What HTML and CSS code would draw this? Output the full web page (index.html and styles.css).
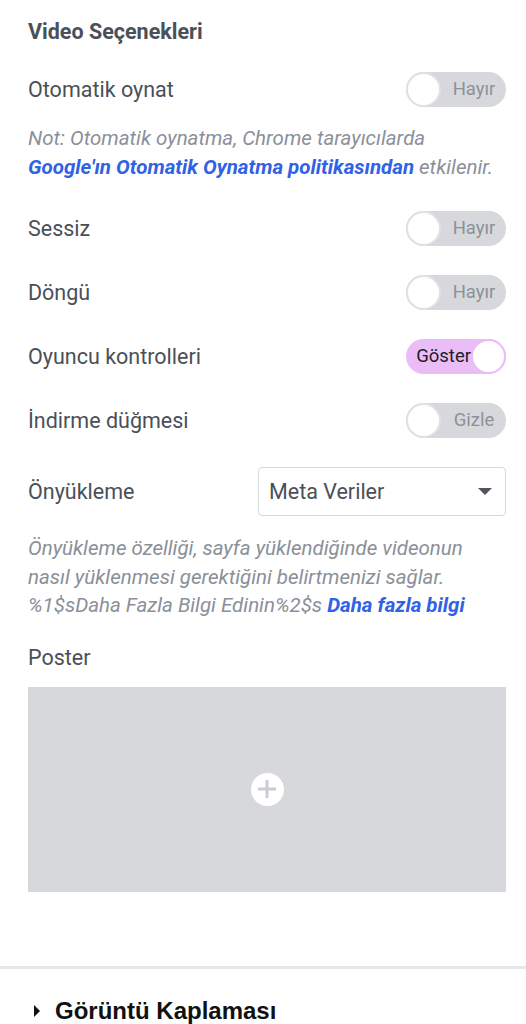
FILE: index.html
```html
<!DOCTYPE html>
<html lang="tr">
<head>
  <meta charset="UTF-8">
  <meta name="viewport" content="width=device-width, initial-scale=1.0">
  <title>Video Seçenekleri</title>
  <link rel="stylesheet" href="styles.css">
</head>
<body>
  <div class="section">
    <h2 class="section-title">Video Seçenekleri</h2>

    <!-- Otomatik oynat -->
    <div class="row">
      <span class="label">Otomatik oynat</span>
      <div class="switch"><span class="knob"></span><span class="switch-text">Hayır</span></div>
    </div>
    <p class="note note-autoplay">Not: Otomatik oynatma, Chrome tarayıcılarda <a href="#" class="link">Google'ın Otomatik Oynatma politikasından</a> etkilenir.</p>

    <div class="row row-first">
      <span class="label">Sessiz</span>
      <div class="switch"><span class="knob"></span><span class="switch-text">Hayır</span></div>
    </div>

    <div class="row">
      <span class="label">Döngü</span>
      <div class="switch"><span class="knob"></span><span class="switch-text">Hayır</span></div>
    </div>

    <div class="row">
      <span class="label">Oyuncu kontrolleri</span>
      <div class="switch on"><span class="switch-text">Göster</span><span class="knob"></span></div>
    </div>

    <div class="row">
      <span class="label">İndirme düğmesi</span>
      <div class="switch"><span class="knob"></span><span class="switch-text">Gizle</span></div>
    </div>

    <!-- Önyükleme -->
    <div class="row row-select">
      <span class="label">Önyükleme</span>
      <div class="select">
        <span>Meta Veriler</span>
        <span class="caret"></span>
      </div>
    </div>
    <p class="note note-preload">Önyükleme özelliği, sayfa yüklendiğinde videonun nasıl yüklenmesi gerektiğini belirtmenizi sağlar. %1$sDaha Fazla Bilgi Edinin%2$s <a href="#" class="link">Daha fazla bilgi</a></p>

    <div class="poster-label">Poster</div>
    <div class="poster">
      <span class="plus">
        <svg width="18" height="18" viewBox="0 0 18 18">
          <path d="M9 1v16M1 9h16" stroke="#c9ccd1" stroke-width="3" stroke-linecap="round"/>
        </svg>
      </span>
    </div>
  </div>

  <div class="panel-header">
    <span class="arrow"></span>
    <span>Görüntü Kaplaması</span>
  </div>
</body>
</html>
```

FILE: styles.css
```css
/* General Styles */
body {
  margin: 0;
  background: #fff;
  font-family: Roboto, 'Liberation Sans', sans-serif;
  color: #4a5058;
}

.section {
  padding: 19px 20px 0 28px;
}

.section-title {
  margin: 0;
  font-size: 21.5px;
  line-height: 26px;
  font-weight: 700;
  color: #4a5058;
}

.row {
  display: flex;
  align-items: center;
  justify-content: space-between;
  height: 36px;
  margin-top: 28px;
}

.section-title + .row {
  margin-top: 26px;
}

.label {
  font-size: 21.5px;
}

/* Toggle switch */
.switch {
  display: flex;
  align-items: center;
  width: 100px;
  height: 35px;
  box-sizing: border-box;
  border-radius: 18px;
  background: #d6d8dc;
  font-size: 18.5px;
  color: #8c929a;
}

.switch .knob {
  width: 35px;
  height: 35px;
  box-sizing: border-box;
  border-radius: 50%;
  background: #fff;
  border: 2px solid #dfe1e5;
  flex-shrink: 0;
}

.switch .switch-text {
  flex: 1;
  text-align: center;
  padding-left: 1px;
}

.switch.on {
  background: #ebbdf7;
  color: #1d2024;
}

.switch.on .knob {
  border-color: #ebbdf7;
}

.switch.on .switch-text {
  padding-left: 0;
  text-align: right;
  padding-right: 0;
}

/* Help notes */
.note {
  margin: 17px 0 0;
  font-size: 20.5px;
  line-height: 29px;
  font-style: italic;
  color: #8a9099;
}

.note-preload {
  line-height: 28.5px;
  margin-top: 18px;
}

.link {
  color: #2f62e4;
  font-weight: 700;
  text-decoration: none;
}

/* Select */
.row-select {
  height: 49px;
  margin-top: 29px;
}

.select {
  display: flex;
  align-items: center;
  justify-content: space-between;
  width: 248px;
  height: 49px;
  box-sizing: border-box;
  padding: 0 13px 0 10px;
  border: 1px solid #d6d8dc;
  border-radius: 4px;
  font-size: 21.5px;
  color: #4a5058;
}

.caret {
  width: 0;
  height: 0;
  border-left: 7px solid transparent;
  border-right: 7px solid transparent;
  border-top: 7px solid #50555c;
}

/* Poster */
.poster-label {
  margin-top: 25px;
  font-size: 21.5px;
  line-height: 26px;
}

.poster {
  display: flex;
  align-items: center;
  justify-content: center;
  height: 205px;
  margin-top: 16px;
  background: #d6d8dc;
}

.plus {
  display: flex;
  align-items: center;
  justify-content: center;
  width: 33px;
  height: 33px;
  border-radius: 50%;
  background: #fff;
}

/* Collapsed panel */
.panel-header {
  display: flex;
  align-items: center;
  gap: 15px;
  margin-top: 74px;
  border-top: 3px solid #e6e7ea;
  padding: 28px 0 0 34px;
  font-family: 'Liberation Sans', Arial, sans-serif;
  font-size: 24px;
  font-weight: 700;
  color: #111;
}

.arrow {
  width: 0;
  height: 0;
  border-top: 6px solid transparent;
  border-bottom: 6px solid transparent;
  border-left: 6px solid #111;
}
```
